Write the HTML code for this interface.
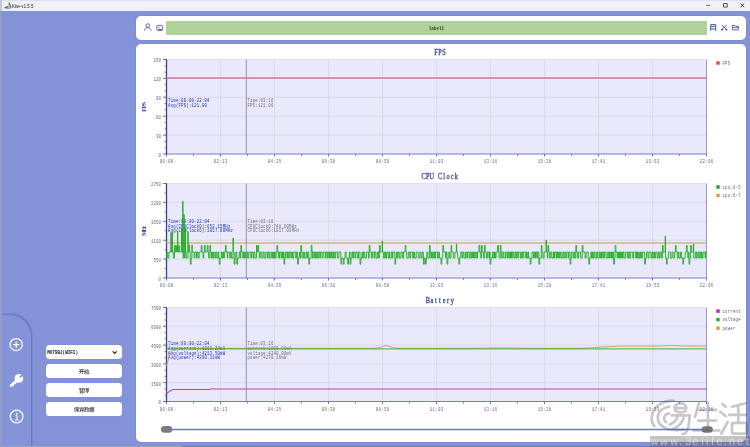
<!DOCTYPE html>
<html><head><meta charset="utf-8"><style>
html,body{margin:0;padding:0;}
body{width:750px;height:447px;overflow:hidden;position:relative;background:#8492d8;font-family:"Liberation Sans",sans-serif;}
.abs{position:absolute;}
#titlebar{left:0;top:0;width:750px;height:10.5px;background:#eef2f8;border-top:1px solid #dde1e8;box-sizing:border-box;}
.card{background:#fff;border-radius:5px;box-shadow:0 0 0 0.8px #7d8cd6;}
#topcard{left:136.3px;top:15.8px;width:609.7px;height:24px;}
#main{left:136.3px;top:43.8px;width:609.7px;height:398px;}
#lbl{left:166px;top:20.9px;width:541px;height:14px;background:#b1d19a;}
#nav{left:0;top:315px;width:31.3px;height:140px;background:#8593d9;border-top-right-radius:21px;box-shadow:0.3px -0.3px 1.8px rgba(60,70,150,0.45);}
.btn{left:45.8px;width:76px;height:14px;background:#fff;border-radius:3.5px;box-shadow:0 0 0 0.6px #8090d8;}
#svg,#wm{left:0;top:0;}
#band{left:650.2px;top:436.2px;width:100px;height:11px;background:rgba(90,90,90,0.36);}
#bandtxt{left:650px;top:436.5px;width:100px;height:10px;font-family:"Liberation Mono",monospace;font-size:9.5px;line-height:10px;color:rgba(235,235,235,0.9);letter-spacing:0.0px;white-space:nowrap;}
</style></head><body>
<div class="abs" id="titlebar"></div>
<div class="abs" id="nav"></div>
<div class="abs" style="left:12.4px;top:1.6px;font-size:6px;line-height:8px;color:#1c1c1c;transform:scaleX(0.75);transform-origin:0 0;will-change:transform;white-space:nowrap">Kite-v1.5.5</div>
<div class="abs" style="left:0;top:10.5px;width:2px;height:437px;background:linear-gradient(90deg,#9aa0c4,#8f98cc)"></div><div class="abs" style="left:0;top:0;width:1.5px;height:10.5px;background:#c4c8d4"></div>
<div class="abs" style="left:0;top:446px;width:182px;height:1px;background:#98a0c0"></div><div class="abs" style="left:182px;top:446px;width:568px;height:1px;background:#6c7cc8"></div>
<div class="abs card" id="topcard"></div>
<div class="abs card" id="main"></div>
<div class="abs" id="lbl"></div>
<div class="abs btn" style="top:345px"></div>
<div class="abs btn" style="top:363.9px"></div>
<div class="abs btn" style="top:382.9px"></div>
<div class="abs btn" style="top:401.9px"></div>
<svg class="abs" id="svg" width="750" height="447" viewBox="0 0 750 447">
<text x="428.8" y="29.9" font-family="Liberation Mono" font-size="5.6" font-weight="bold" fill="#2e3c2e" textLength="15.2" lengthAdjust="spacingAndGlyphs">label1</text>
<rect x="166.5" y="59.5" width="540.0" height="94.5" fill="#e9e9fb"/>
<line x1="166.5" y1="59.5" x2="706.5" y2="59.5" stroke="#dcdcf0" stroke-width="0.8"/>
<line x1="220.5" y1="59.5" x2="220.5" y2="154.0" stroke="#d6d6ec" stroke-width="0.8"/>
<line x1="274.5" y1="59.5" x2="274.5" y2="154.0" stroke="#d6d6ec" stroke-width="0.8"/>
<line x1="328.5" y1="59.5" x2="328.5" y2="154.0" stroke="#d6d6ec" stroke-width="0.8"/>
<line x1="382.5" y1="59.5" x2="382.5" y2="154.0" stroke="#d6d6ec" stroke-width="0.8"/>
<line x1="436.5" y1="59.5" x2="436.5" y2="154.0" stroke="#d6d6ec" stroke-width="0.8"/>
<line x1="490.5" y1="59.5" x2="490.5" y2="154.0" stroke="#d6d6ec" stroke-width="0.8"/>
<line x1="544.5" y1="59.5" x2="544.5" y2="154.0" stroke="#d6d6ec" stroke-width="0.8"/>
<line x1="598.5" y1="59.5" x2="598.5" y2="154.0" stroke="#d6d6ec" stroke-width="0.8"/>
<line x1="652.5" y1="59.5" x2="652.5" y2="154.0" stroke="#d6d6ec" stroke-width="0.8"/>
<line x1="166.5" y1="135.10" x2="706.5" y2="135.10" stroke="#d6d6ec" stroke-width="0.8"/>
<line x1="166.5" y1="116.20" x2="706.5" y2="116.20" stroke="#d6d6ec" stroke-width="0.8"/>
<line x1="166.5" y1="97.30" x2="706.5" y2="97.30" stroke="#d6d6ec" stroke-width="0.8"/>
<line x1="166.5" y1="78.40" x2="706.5" y2="78.40" stroke="#d6d6ec" stroke-width="0.8"/>
<line x1="706.5" y1="59.5" x2="706.5" y2="154.0" stroke="#8c8cc8" stroke-width="0.9"/>
<text transform="translate(433.88 54.90) scale(0.85 1)" x="2.40 7.20 12.00" y="0" text-anchor="middle" font-family="Liberation Serif" font-size="7.4" fill="#3e478a" stroke="#3e478a" stroke-width="0.3">FPS</text>
<line x1="163" y1="154.00" x2="166.5" y2="154.00" stroke="#5a62b0" stroke-width="0.9"/>
<text transform="translate(158.40 156.80) scale(0.68 1)" x="1.84" y="0" text-anchor="middle" font-family="Liberation Mono" font-size="6.1" fill="#62667c" >0</text>
<line x1="164.5" y1="147.70" x2="166.5" y2="147.70" stroke="#5a62b0" stroke-width="0.8"/>
<line x1="164.5" y1="141.40" x2="166.5" y2="141.40" stroke="#5a62b0" stroke-width="0.8"/>
<line x1="163" y1="135.10" x2="166.5" y2="135.10" stroke="#5a62b0" stroke-width="0.9"/>
<text transform="translate(155.90 137.90) scale(0.68 1)" x="1.84 5.51" y="0" text-anchor="middle" font-family="Liberation Mono" font-size="6.1" fill="#62667c" >30</text>
<line x1="164.5" y1="128.80" x2="166.5" y2="128.80" stroke="#5a62b0" stroke-width="0.8"/>
<line x1="164.5" y1="122.50" x2="166.5" y2="122.50" stroke="#5a62b0" stroke-width="0.8"/>
<line x1="163" y1="116.20" x2="166.5" y2="116.20" stroke="#5a62b0" stroke-width="0.9"/>
<text transform="translate(155.90 119.00) scale(0.68 1)" x="1.84 5.51" y="0" text-anchor="middle" font-family="Liberation Mono" font-size="6.1" fill="#62667c" >60</text>
<line x1="164.5" y1="109.90" x2="166.5" y2="109.90" stroke="#5a62b0" stroke-width="0.8"/>
<line x1="164.5" y1="103.60" x2="166.5" y2="103.60" stroke="#5a62b0" stroke-width="0.8"/>
<line x1="163" y1="97.30" x2="166.5" y2="97.30" stroke="#5a62b0" stroke-width="0.9"/>
<text transform="translate(155.90 100.10) scale(0.68 1)" x="1.84 5.51" y="0" text-anchor="middle" font-family="Liberation Mono" font-size="6.1" fill="#62667c" >90</text>
<line x1="164.5" y1="91.00" x2="166.5" y2="91.00" stroke="#5a62b0" stroke-width="0.8"/>
<line x1="164.5" y1="84.70" x2="166.5" y2="84.70" stroke="#5a62b0" stroke-width="0.8"/>
<line x1="163" y1="78.40" x2="166.5" y2="78.40" stroke="#5a62b0" stroke-width="0.9"/>
<text transform="translate(153.40 81.20) scale(0.68 1)" x="1.84 5.51 9.19" y="0" text-anchor="middle" font-family="Liberation Mono" font-size="6.1" fill="#62667c" >120</text>
<line x1="164.5" y1="72.10" x2="166.5" y2="72.10" stroke="#5a62b0" stroke-width="0.8"/>
<line x1="164.5" y1="65.80" x2="166.5" y2="65.80" stroke="#5a62b0" stroke-width="0.8"/>
<line x1="163" y1="59.50" x2="166.5" y2="59.50" stroke="#5a62b0" stroke-width="0.9"/>
<text transform="translate(153.40 62.30) scale(0.68 1)" x="1.84 5.51 9.19" y="0" text-anchor="middle" font-family="Liberation Mono" font-size="6.1" fill="#62667c" >150</text>
<line x1="166.5" y1="154.0" x2="166.5" y2="156.5" stroke="#5a62b0" stroke-width="0.9"/>
<line x1="193.5" y1="154.0" x2="193.5" y2="156.0" stroke="#5a62b0" stroke-width="0.8"/>
<text transform="translate(159.65 163.10) scale(0.72 1)" x="1.90 5.71 9.51 13.32 17.13" y="0" text-anchor="middle" font-family="Liberation Mono" font-size="5.8" fill="#666a8a" >00:00</text>
<line x1="220.5" y1="154.0" x2="220.5" y2="156.5" stroke="#5a62b0" stroke-width="0.9"/>
<line x1="247.5" y1="154.0" x2="247.5" y2="156.0" stroke="#5a62b0" stroke-width="0.8"/>
<text transform="translate(213.65 163.10) scale(0.72 1)" x="1.90 5.71 9.51 13.32 17.13" y="0" text-anchor="middle" font-family="Liberation Mono" font-size="5.8" fill="#666a8a" >02:13</text>
<line x1="274.5" y1="154.0" x2="274.5" y2="156.5" stroke="#5a62b0" stroke-width="0.9"/>
<line x1="301.5" y1="154.0" x2="301.5" y2="156.0" stroke="#5a62b0" stroke-width="0.8"/>
<text transform="translate(267.65 163.10) scale(0.72 1)" x="1.90 5.71 9.51 13.32 17.13" y="0" text-anchor="middle" font-family="Liberation Mono" font-size="5.8" fill="#666a8a" >04:25</text>
<line x1="328.5" y1="154.0" x2="328.5" y2="156.5" stroke="#5a62b0" stroke-width="0.9"/>
<line x1="355.5" y1="154.0" x2="355.5" y2="156.0" stroke="#5a62b0" stroke-width="0.8"/>
<text transform="translate(321.65 163.10) scale(0.72 1)" x="1.90 5.71 9.51 13.32 17.13" y="0" text-anchor="middle" font-family="Liberation Mono" font-size="5.8" fill="#666a8a" >06:38</text>
<line x1="382.5" y1="154.0" x2="382.5" y2="156.5" stroke="#5a62b0" stroke-width="0.9"/>
<line x1="409.5" y1="154.0" x2="409.5" y2="156.0" stroke="#5a62b0" stroke-width="0.8"/>
<text transform="translate(375.65 163.10) scale(0.72 1)" x="1.90 5.71 9.51 13.32 17.13" y="0" text-anchor="middle" font-family="Liberation Mono" font-size="5.8" fill="#666a8a" >08:50</text>
<line x1="436.5" y1="154.0" x2="436.5" y2="156.5" stroke="#5a62b0" stroke-width="0.9"/>
<line x1="463.5" y1="154.0" x2="463.5" y2="156.0" stroke="#5a62b0" stroke-width="0.8"/>
<text transform="translate(429.65 163.10) scale(0.72 1)" x="1.90 5.71 9.51 13.32 17.13" y="0" text-anchor="middle" font-family="Liberation Mono" font-size="5.8" fill="#666a8a" >11:03</text>
<line x1="490.5" y1="154.0" x2="490.5" y2="156.5" stroke="#5a62b0" stroke-width="0.9"/>
<line x1="517.5" y1="154.0" x2="517.5" y2="156.0" stroke="#5a62b0" stroke-width="0.8"/>
<text transform="translate(483.65 163.10) scale(0.72 1)" x="1.90 5.71 9.51 13.32 17.13" y="0" text-anchor="middle" font-family="Liberation Mono" font-size="5.8" fill="#666a8a" >13:16</text>
<line x1="544.5" y1="154.0" x2="544.5" y2="156.5" stroke="#5a62b0" stroke-width="0.9"/>
<line x1="571.5" y1="154.0" x2="571.5" y2="156.0" stroke="#5a62b0" stroke-width="0.8"/>
<text transform="translate(537.65 163.10) scale(0.72 1)" x="1.90 5.71 9.51 13.32 17.13" y="0" text-anchor="middle" font-family="Liberation Mono" font-size="5.8" fill="#666a8a" >15:28</text>
<line x1="598.5" y1="154.0" x2="598.5" y2="156.5" stroke="#5a62b0" stroke-width="0.9"/>
<line x1="625.5" y1="154.0" x2="625.5" y2="156.0" stroke="#5a62b0" stroke-width="0.8"/>
<text transform="translate(591.65 163.10) scale(0.72 1)" x="1.90 5.71 9.51 13.32 17.13" y="0" text-anchor="middle" font-family="Liberation Mono" font-size="5.8" fill="#666a8a" >17:41</text>
<line x1="652.5" y1="154.0" x2="652.5" y2="156.5" stroke="#5a62b0" stroke-width="0.9"/>
<line x1="679.5" y1="154.0" x2="679.5" y2="156.0" stroke="#5a62b0" stroke-width="0.8"/>
<text transform="translate(645.65 163.10) scale(0.72 1)" x="1.90 5.71 9.51 13.32 17.13" y="0" text-anchor="middle" font-family="Liberation Mono" font-size="5.8" fill="#666a8a" >19:53</text>
<line x1="706.5" y1="154.0" x2="706.5" y2="156.5" stroke="#5a62b0" stroke-width="0.9"/>
<text transform="translate(699.65 163.10) scale(0.72 1)" x="1.90 5.71 9.51 13.32 17.13" y="0" text-anchor="middle" font-family="Liberation Mono" font-size="5.8" fill="#666a8a" >22:06</text>
<line x1="166.5" y1="154.0" x2="706.5" y2="154.0" stroke="#747cca" stroke-width="1.0"/>
<line x1="166.5" y1="59.2" x2="166.5" y2="154.5" stroke="#3c4290" stroke-width="1.3"/>
<g transform="rotate(-90 143.9 106.75)">
<text x="138.95" y="108.55" font-family="Liberation Serif" font-size="6.0" font-weight="bold" fill="#3444a8" textLength="9.90" lengthAdjust="spacing" >FPS</text>
</g>
<rect x="166.5" y="183.5" width="540.0" height="94.5" fill="#e9e9fb"/>
<line x1="166.5" y1="183.5" x2="706.5" y2="183.5" stroke="#dcdcf0" stroke-width="0.8"/>
<line x1="220.5" y1="183.5" x2="220.5" y2="278.0" stroke="#d6d6ec" stroke-width="0.8"/>
<line x1="274.5" y1="183.5" x2="274.5" y2="278.0" stroke="#d6d6ec" stroke-width="0.8"/>
<line x1="328.5" y1="183.5" x2="328.5" y2="278.0" stroke="#d6d6ec" stroke-width="0.8"/>
<line x1="382.5" y1="183.5" x2="382.5" y2="278.0" stroke="#d6d6ec" stroke-width="0.8"/>
<line x1="436.5" y1="183.5" x2="436.5" y2="278.0" stroke="#d6d6ec" stroke-width="0.8"/>
<line x1="490.5" y1="183.5" x2="490.5" y2="278.0" stroke="#d6d6ec" stroke-width="0.8"/>
<line x1="544.5" y1="183.5" x2="544.5" y2="278.0" stroke="#d6d6ec" stroke-width="0.8"/>
<line x1="598.5" y1="183.5" x2="598.5" y2="278.0" stroke="#d6d6ec" stroke-width="0.8"/>
<line x1="652.5" y1="183.5" x2="652.5" y2="278.0" stroke="#d6d6ec" stroke-width="0.8"/>
<line x1="166.5" y1="259.10" x2="706.5" y2="259.10" stroke="#d6d6ec" stroke-width="0.8"/>
<line x1="166.5" y1="240.20" x2="706.5" y2="240.20" stroke="#d6d6ec" stroke-width="0.8"/>
<line x1="166.5" y1="221.30" x2="706.5" y2="221.30" stroke="#d6d6ec" stroke-width="0.8"/>
<line x1="166.5" y1="202.40" x2="706.5" y2="202.40" stroke="#d6d6ec" stroke-width="0.8"/>
<line x1="706.5" y1="183.5" x2="706.5" y2="278.0" stroke="#8c8cc8" stroke-width="0.9"/>
<text transform="translate(421.64 178.70) scale(0.85 1)" x="2.40 7.20 12.00 16.80 21.60 26.40 31.20 36.00 40.80" y="0" text-anchor="middle" font-family="Liberation Serif" font-size="7.4" fill="#3e478a" stroke="#3e478a" stroke-width="0.3">CPU Clock</text>
<line x1="163" y1="278.00" x2="166.5" y2="278.00" stroke="#5a62b0" stroke-width="0.9"/>
<text transform="translate(158.40 280.80) scale(0.68 1)" x="1.84" y="0" text-anchor="middle" font-family="Liberation Mono" font-size="6.1" fill="#62667c" >0</text>
<line x1="164.5" y1="268.55" x2="166.5" y2="268.55" stroke="#5a62b0" stroke-width="0.8"/>
<line x1="163" y1="259.10" x2="166.5" y2="259.10" stroke="#5a62b0" stroke-width="0.9"/>
<text transform="translate(153.40 261.90) scale(0.68 1)" x="1.84 5.51 9.19" y="0" text-anchor="middle" font-family="Liberation Mono" font-size="6.1" fill="#62667c" >550</text>
<line x1="164.5" y1="249.65" x2="166.5" y2="249.65" stroke="#5a62b0" stroke-width="0.8"/>
<line x1="163" y1="240.20" x2="166.5" y2="240.20" stroke="#5a62b0" stroke-width="0.9"/>
<text transform="translate(150.90 243.00) scale(0.68 1)" x="1.84 5.51 9.19 12.87" y="0" text-anchor="middle" font-family="Liberation Mono" font-size="6.1" fill="#62667c" >1100</text>
<line x1="164.5" y1="230.75" x2="166.5" y2="230.75" stroke="#5a62b0" stroke-width="0.8"/>
<line x1="163" y1="221.30" x2="166.5" y2="221.30" stroke="#5a62b0" stroke-width="0.9"/>
<text transform="translate(150.90 224.10) scale(0.68 1)" x="1.84 5.51 9.19 12.87" y="0" text-anchor="middle" font-family="Liberation Mono" font-size="6.1" fill="#62667c" >1650</text>
<line x1="164.5" y1="211.85" x2="166.5" y2="211.85" stroke="#5a62b0" stroke-width="0.8"/>
<line x1="163" y1="202.40" x2="166.5" y2="202.40" stroke="#5a62b0" stroke-width="0.9"/>
<text transform="translate(150.90 205.20) scale(0.68 1)" x="1.84 5.51 9.19 12.87" y="0" text-anchor="middle" font-family="Liberation Mono" font-size="6.1" fill="#62667c" >2200</text>
<line x1="164.5" y1="192.95" x2="166.5" y2="192.95" stroke="#5a62b0" stroke-width="0.8"/>
<line x1="163" y1="183.50" x2="166.5" y2="183.50" stroke="#5a62b0" stroke-width="0.9"/>
<text transform="translate(150.90 186.30) scale(0.68 1)" x="1.84 5.51 9.19 12.87" y="0" text-anchor="middle" font-family="Liberation Mono" font-size="6.1" fill="#62667c" >2750</text>
<line x1="166.5" y1="278.0" x2="166.5" y2="280.5" stroke="#5a62b0" stroke-width="0.9"/>
<line x1="193.5" y1="278.0" x2="193.5" y2="280.0" stroke="#5a62b0" stroke-width="0.8"/>
<text transform="translate(159.65 287.10) scale(0.72 1)" x="1.90 5.71 9.51 13.32 17.13" y="0" text-anchor="middle" font-family="Liberation Mono" font-size="5.8" fill="#666a8a" >00:00</text>
<line x1="220.5" y1="278.0" x2="220.5" y2="280.5" stroke="#5a62b0" stroke-width="0.9"/>
<line x1="247.5" y1="278.0" x2="247.5" y2="280.0" stroke="#5a62b0" stroke-width="0.8"/>
<text transform="translate(213.65 287.10) scale(0.72 1)" x="1.90 5.71 9.51 13.32 17.13" y="0" text-anchor="middle" font-family="Liberation Mono" font-size="5.8" fill="#666a8a" >02:13</text>
<line x1="274.5" y1="278.0" x2="274.5" y2="280.5" stroke="#5a62b0" stroke-width="0.9"/>
<line x1="301.5" y1="278.0" x2="301.5" y2="280.0" stroke="#5a62b0" stroke-width="0.8"/>
<text transform="translate(267.65 287.10) scale(0.72 1)" x="1.90 5.71 9.51 13.32 17.13" y="0" text-anchor="middle" font-family="Liberation Mono" font-size="5.8" fill="#666a8a" >04:25</text>
<line x1="328.5" y1="278.0" x2="328.5" y2="280.5" stroke="#5a62b0" stroke-width="0.9"/>
<line x1="355.5" y1="278.0" x2="355.5" y2="280.0" stroke="#5a62b0" stroke-width="0.8"/>
<text transform="translate(321.65 287.10) scale(0.72 1)" x="1.90 5.71 9.51 13.32 17.13" y="0" text-anchor="middle" font-family="Liberation Mono" font-size="5.8" fill="#666a8a" >06:38</text>
<line x1="382.5" y1="278.0" x2="382.5" y2="280.5" stroke="#5a62b0" stroke-width="0.9"/>
<line x1="409.5" y1="278.0" x2="409.5" y2="280.0" stroke="#5a62b0" stroke-width="0.8"/>
<text transform="translate(375.65 287.10) scale(0.72 1)" x="1.90 5.71 9.51 13.32 17.13" y="0" text-anchor="middle" font-family="Liberation Mono" font-size="5.8" fill="#666a8a" >08:50</text>
<line x1="436.5" y1="278.0" x2="436.5" y2="280.5" stroke="#5a62b0" stroke-width="0.9"/>
<line x1="463.5" y1="278.0" x2="463.5" y2="280.0" stroke="#5a62b0" stroke-width="0.8"/>
<text transform="translate(429.65 287.10) scale(0.72 1)" x="1.90 5.71 9.51 13.32 17.13" y="0" text-anchor="middle" font-family="Liberation Mono" font-size="5.8" fill="#666a8a" >11:03</text>
<line x1="490.5" y1="278.0" x2="490.5" y2="280.5" stroke="#5a62b0" stroke-width="0.9"/>
<line x1="517.5" y1="278.0" x2="517.5" y2="280.0" stroke="#5a62b0" stroke-width="0.8"/>
<text transform="translate(483.65 287.10) scale(0.72 1)" x="1.90 5.71 9.51 13.32 17.13" y="0" text-anchor="middle" font-family="Liberation Mono" font-size="5.8" fill="#666a8a" >13:16</text>
<line x1="544.5" y1="278.0" x2="544.5" y2="280.5" stroke="#5a62b0" stroke-width="0.9"/>
<line x1="571.5" y1="278.0" x2="571.5" y2="280.0" stroke="#5a62b0" stroke-width="0.8"/>
<text transform="translate(537.65 287.10) scale(0.72 1)" x="1.90 5.71 9.51 13.32 17.13" y="0" text-anchor="middle" font-family="Liberation Mono" font-size="5.8" fill="#666a8a" >15:28</text>
<line x1="598.5" y1="278.0" x2="598.5" y2="280.5" stroke="#5a62b0" stroke-width="0.9"/>
<line x1="625.5" y1="278.0" x2="625.5" y2="280.0" stroke="#5a62b0" stroke-width="0.8"/>
<text transform="translate(591.65 287.10) scale(0.72 1)" x="1.90 5.71 9.51 13.32 17.13" y="0" text-anchor="middle" font-family="Liberation Mono" font-size="5.8" fill="#666a8a" >17:41</text>
<line x1="652.5" y1="278.0" x2="652.5" y2="280.5" stroke="#5a62b0" stroke-width="0.9"/>
<line x1="679.5" y1="278.0" x2="679.5" y2="280.0" stroke="#5a62b0" stroke-width="0.8"/>
<text transform="translate(645.65 287.10) scale(0.72 1)" x="1.90 5.71 9.51 13.32 17.13" y="0" text-anchor="middle" font-family="Liberation Mono" font-size="5.8" fill="#666a8a" >19:53</text>
<line x1="706.5" y1="278.0" x2="706.5" y2="280.5" stroke="#5a62b0" stroke-width="0.9"/>
<text transform="translate(699.65 287.10) scale(0.72 1)" x="1.90 5.71 9.51 13.32 17.13" y="0" text-anchor="middle" font-family="Liberation Mono" font-size="5.8" fill="#666a8a" >22:06</text>
<line x1="166.5" y1="278.0" x2="706.5" y2="278.0" stroke="#747cca" stroke-width="1.0"/>
<line x1="166.5" y1="183.2" x2="166.5" y2="278.5" stroke="#3c4290" stroke-width="1.3"/>
<g transform="rotate(-90 143.9 230.75)">
<text x="138.95" y="232.55" font-family="Liberation Serif" font-size="6.0" font-weight="bold" fill="#3444a8" textLength="9.90" lengthAdjust="spacing" >MHz</text>
</g>
<rect x="166.5" y="307.5" width="540.0" height="94.0" fill="#e9e9fb"/>
<line x1="166.5" y1="307.5" x2="706.5" y2="307.5" stroke="#dcdcf0" stroke-width="0.8"/>
<line x1="220.5" y1="307.5" x2="220.5" y2="401.5" stroke="#d6d6ec" stroke-width="0.8"/>
<line x1="274.5" y1="307.5" x2="274.5" y2="401.5" stroke="#d6d6ec" stroke-width="0.8"/>
<line x1="328.5" y1="307.5" x2="328.5" y2="401.5" stroke="#d6d6ec" stroke-width="0.8"/>
<line x1="382.5" y1="307.5" x2="382.5" y2="401.5" stroke="#d6d6ec" stroke-width="0.8"/>
<line x1="436.5" y1="307.5" x2="436.5" y2="401.5" stroke="#d6d6ec" stroke-width="0.8"/>
<line x1="490.5" y1="307.5" x2="490.5" y2="401.5" stroke="#d6d6ec" stroke-width="0.8"/>
<line x1="544.5" y1="307.5" x2="544.5" y2="401.5" stroke="#d6d6ec" stroke-width="0.8"/>
<line x1="598.5" y1="307.5" x2="598.5" y2="401.5" stroke="#d6d6ec" stroke-width="0.8"/>
<line x1="652.5" y1="307.5" x2="652.5" y2="401.5" stroke="#d6d6ec" stroke-width="0.8"/>
<line x1="166.5" y1="382.70" x2="706.5" y2="382.70" stroke="#d6d6ec" stroke-width="0.8"/>
<line x1="166.5" y1="363.90" x2="706.5" y2="363.90" stroke="#d6d6ec" stroke-width="0.8"/>
<line x1="166.5" y1="345.10" x2="706.5" y2="345.10" stroke="#d6d6ec" stroke-width="0.8"/>
<line x1="166.5" y1="326.30" x2="706.5" y2="326.30" stroke="#d6d6ec" stroke-width="0.8"/>
<line x1="706.5" y1="307.5" x2="706.5" y2="401.5" stroke="#8c8cc8" stroke-width="0.9"/>
<text transform="translate(425.72 302.50) scale(0.85 1)" x="2.40 7.20 12.00 16.80 21.60 26.40 31.20" y="0" text-anchor="middle" font-family="Liberation Serif" font-size="7.4" fill="#3e478a" stroke="#3e478a" stroke-width="0.3">Battery</text>
<line x1="163" y1="401.50" x2="166.5" y2="401.50" stroke="#5a62b0" stroke-width="0.9"/>
<text transform="translate(158.40 404.30) scale(0.68 1)" x="1.84" y="0" text-anchor="middle" font-family="Liberation Mono" font-size="6.1" fill="#62667c" >0</text>
<line x1="164.5" y1="395.23" x2="166.5" y2="395.23" stroke="#5a62b0" stroke-width="0.8"/>
<line x1="164.5" y1="388.97" x2="166.5" y2="388.97" stroke="#5a62b0" stroke-width="0.8"/>
<line x1="163" y1="382.70" x2="166.5" y2="382.70" stroke="#5a62b0" stroke-width="0.9"/>
<text transform="translate(150.90 385.50) scale(0.68 1)" x="1.84 5.51 9.19 12.87" y="0" text-anchor="middle" font-family="Liberation Mono" font-size="6.1" fill="#62667c" >1500</text>
<line x1="164.5" y1="376.43" x2="166.5" y2="376.43" stroke="#5a62b0" stroke-width="0.8"/>
<line x1="164.5" y1="370.17" x2="166.5" y2="370.17" stroke="#5a62b0" stroke-width="0.8"/>
<line x1="163" y1="363.90" x2="166.5" y2="363.90" stroke="#5a62b0" stroke-width="0.9"/>
<text transform="translate(150.90 366.70) scale(0.68 1)" x="1.84 5.51 9.19 12.87" y="0" text-anchor="middle" font-family="Liberation Mono" font-size="6.1" fill="#62667c" >3000</text>
<line x1="164.5" y1="357.63" x2="166.5" y2="357.63" stroke="#5a62b0" stroke-width="0.8"/>
<line x1="164.5" y1="351.37" x2="166.5" y2="351.37" stroke="#5a62b0" stroke-width="0.8"/>
<line x1="163" y1="345.10" x2="166.5" y2="345.10" stroke="#5a62b0" stroke-width="0.9"/>
<text transform="translate(150.90 347.90) scale(0.68 1)" x="1.84 5.51 9.19 12.87" y="0" text-anchor="middle" font-family="Liberation Mono" font-size="6.1" fill="#62667c" >4500</text>
<line x1="164.5" y1="338.83" x2="166.5" y2="338.83" stroke="#5a62b0" stroke-width="0.8"/>
<line x1="164.5" y1="332.57" x2="166.5" y2="332.57" stroke="#5a62b0" stroke-width="0.8"/>
<line x1="163" y1="326.30" x2="166.5" y2="326.30" stroke="#5a62b0" stroke-width="0.9"/>
<text transform="translate(150.90 329.10) scale(0.68 1)" x="1.84 5.51 9.19 12.87" y="0" text-anchor="middle" font-family="Liberation Mono" font-size="6.1" fill="#62667c" >6000</text>
<line x1="164.5" y1="320.03" x2="166.5" y2="320.03" stroke="#5a62b0" stroke-width="0.8"/>
<line x1="164.5" y1="313.77" x2="166.5" y2="313.77" stroke="#5a62b0" stroke-width="0.8"/>
<line x1="163" y1="307.50" x2="166.5" y2="307.50" stroke="#5a62b0" stroke-width="0.9"/>
<text transform="translate(150.90 310.30) scale(0.68 1)" x="1.84 5.51 9.19 12.87" y="0" text-anchor="middle" font-family="Liberation Mono" font-size="6.1" fill="#62667c" >7500</text>
<line x1="166.5" y1="401.5" x2="166.5" y2="404.0" stroke="#5a62b0" stroke-width="0.9"/>
<line x1="193.5" y1="401.5" x2="193.5" y2="403.5" stroke="#5a62b0" stroke-width="0.8"/>
<text transform="translate(159.65 410.60) scale(0.72 1)" x="1.90 5.71 9.51 13.32 17.13" y="0" text-anchor="middle" font-family="Liberation Mono" font-size="5.8" fill="#666a8a" >00:00</text>
<line x1="220.5" y1="401.5" x2="220.5" y2="404.0" stroke="#5a62b0" stroke-width="0.9"/>
<line x1="247.5" y1="401.5" x2="247.5" y2="403.5" stroke="#5a62b0" stroke-width="0.8"/>
<text transform="translate(213.65 410.60) scale(0.72 1)" x="1.90 5.71 9.51 13.32 17.13" y="0" text-anchor="middle" font-family="Liberation Mono" font-size="5.8" fill="#666a8a" >02:13</text>
<line x1="274.5" y1="401.5" x2="274.5" y2="404.0" stroke="#5a62b0" stroke-width="0.9"/>
<line x1="301.5" y1="401.5" x2="301.5" y2="403.5" stroke="#5a62b0" stroke-width="0.8"/>
<text transform="translate(267.65 410.60) scale(0.72 1)" x="1.90 5.71 9.51 13.32 17.13" y="0" text-anchor="middle" font-family="Liberation Mono" font-size="5.8" fill="#666a8a" >04:25</text>
<line x1="328.5" y1="401.5" x2="328.5" y2="404.0" stroke="#5a62b0" stroke-width="0.9"/>
<line x1="355.5" y1="401.5" x2="355.5" y2="403.5" stroke="#5a62b0" stroke-width="0.8"/>
<text transform="translate(321.65 410.60) scale(0.72 1)" x="1.90 5.71 9.51 13.32 17.13" y="0" text-anchor="middle" font-family="Liberation Mono" font-size="5.8" fill="#666a8a" >06:38</text>
<line x1="382.5" y1="401.5" x2="382.5" y2="404.0" stroke="#5a62b0" stroke-width="0.9"/>
<line x1="409.5" y1="401.5" x2="409.5" y2="403.5" stroke="#5a62b0" stroke-width="0.8"/>
<text transform="translate(375.65 410.60) scale(0.72 1)" x="1.90 5.71 9.51 13.32 17.13" y="0" text-anchor="middle" font-family="Liberation Mono" font-size="5.8" fill="#666a8a" >08:50</text>
<line x1="436.5" y1="401.5" x2="436.5" y2="404.0" stroke="#5a62b0" stroke-width="0.9"/>
<line x1="463.5" y1="401.5" x2="463.5" y2="403.5" stroke="#5a62b0" stroke-width="0.8"/>
<text transform="translate(429.65 410.60) scale(0.72 1)" x="1.90 5.71 9.51 13.32 17.13" y="0" text-anchor="middle" font-family="Liberation Mono" font-size="5.8" fill="#666a8a" >11:03</text>
<line x1="490.5" y1="401.5" x2="490.5" y2="404.0" stroke="#5a62b0" stroke-width="0.9"/>
<line x1="517.5" y1="401.5" x2="517.5" y2="403.5" stroke="#5a62b0" stroke-width="0.8"/>
<text transform="translate(483.65 410.60) scale(0.72 1)" x="1.90 5.71 9.51 13.32 17.13" y="0" text-anchor="middle" font-family="Liberation Mono" font-size="5.8" fill="#666a8a" >13:16</text>
<line x1="544.5" y1="401.5" x2="544.5" y2="404.0" stroke="#5a62b0" stroke-width="0.9"/>
<line x1="571.5" y1="401.5" x2="571.5" y2="403.5" stroke="#5a62b0" stroke-width="0.8"/>
<text transform="translate(537.65 410.60) scale(0.72 1)" x="1.90 5.71 9.51 13.32 17.13" y="0" text-anchor="middle" font-family="Liberation Mono" font-size="5.8" fill="#666a8a" >15:28</text>
<line x1="598.5" y1="401.5" x2="598.5" y2="404.0" stroke="#5a62b0" stroke-width="0.9"/>
<line x1="625.5" y1="401.5" x2="625.5" y2="403.5" stroke="#5a62b0" stroke-width="0.8"/>
<text transform="translate(591.65 410.60) scale(0.72 1)" x="1.90 5.71 9.51 13.32 17.13" y="0" text-anchor="middle" font-family="Liberation Mono" font-size="5.8" fill="#666a8a" >17:41</text>
<line x1="652.5" y1="401.5" x2="652.5" y2="404.0" stroke="#5a62b0" stroke-width="0.9"/>
<line x1="679.5" y1="401.5" x2="679.5" y2="403.5" stroke="#5a62b0" stroke-width="0.8"/>
<text transform="translate(645.65 410.60) scale(0.72 1)" x="1.90 5.71 9.51 13.32 17.13" y="0" text-anchor="middle" font-family="Liberation Mono" font-size="5.8" fill="#666a8a" >19:53</text>
<line x1="706.5" y1="401.5" x2="706.5" y2="404.0" stroke="#5a62b0" stroke-width="0.9"/>
<text transform="translate(699.65 410.60) scale(0.72 1)" x="1.90 5.71 9.51 13.32 17.13" y="0" text-anchor="middle" font-family="Liberation Mono" font-size="5.8" fill="#666a8a" >22:06</text>
<line x1="166.5" y1="401.5" x2="706.5" y2="401.5" stroke="#747cca" stroke-width="1.0"/>
<line x1="166.5" y1="307.2" x2="166.5" y2="402.0" stroke="#3c4290" stroke-width="1.3"/>
<text transform="translate(168.00 102.30) scale(0.8 1)" x="1.62 4.88 8.12 11.38 14.62 17.88 21.12 24.38 27.62 30.88 34.12 37.38 40.62 43.88 47.12 50.37" y="0" text-anchor="middle" font-family="Liberation Mono" font-size="5.0" fill="#1a2cc4" >Time:00:00-22:04</text>
<text transform="translate(168.00 106.70) scale(0.8 1)" x="1.62 4.88 8.12 11.38 14.62 17.88 21.12 24.38 27.62 30.88 34.12 37.38 40.62 43.88 47.12" y="0" text-anchor="middle" font-family="Liberation Mono" font-size="5.0" fill="#1a2cc4" >Avg(FPS):121.00</text>
<text transform="translate(247.40 102.30) scale(0.8 1)" x="1.62 4.88 8.12 11.38 14.62 17.88 21.12 24.38 27.62 30.88" y="0" text-anchor="middle" font-family="Liberation Mono" font-size="5.0" fill="#6c6c74" >Time:03:16</text>
<text transform="translate(247.40 106.70) scale(0.8 1)" x="1.62 4.88 8.12 11.38 14.62 17.88 21.12 24.38 27.62 30.88" y="0" text-anchor="middle" font-family="Liberation Mono" font-size="5.0" fill="#6c6c74" >FPS:121.00</text>
<text transform="translate(168.00 223.30) scale(0.8 1)" x="1.62 4.88 8.12 11.38 14.62 17.88 21.12 24.38 27.62 30.88 34.12 37.38 40.62 43.88 47.12 50.37" y="0" text-anchor="middle" font-family="Liberation Mono" font-size="5.0" fill="#1a2cc4" >Time:00:00-22:04</text>
<text transform="translate(168.00 227.55) scale(0.8 1)" x="1.62 4.88 8.12 11.38 14.62 17.88 21.12 24.38 27.62 30.88 34.12 37.38 40.62 43.88 47.12 50.37 53.62 56.88 60.12 63.37 66.62 69.88 73.12 76.38" y="0" text-anchor="middle" font-family="Liberation Mono" font-size="5.0" fill="#1a2cc4" >Avg(CPUClock0):652.15MHz</text>
<text transform="translate(168.00 231.80) scale(0.8 1)" x="1.62 4.88 8.12 11.38 14.62 17.88 21.12 24.38 27.62 30.88 34.12 37.38 40.62 43.88 47.12 50.37 53.62 56.88 60.12 63.37 66.62 69.88 73.12 76.38 79.62" y="0" text-anchor="middle" font-family="Liberation Mono" font-size="5.0" fill="#1a2cc4" >Avg(CPUClock6):1017.00MHz</text>
<text transform="translate(247.40 223.30) scale(0.8 1)" x="1.62 4.88 8.12 11.38 14.62 17.88 21.12 24.38 27.62 30.88" y="0" text-anchor="middle" font-family="Liberation Mono" font-size="5.0" fill="#6c6c74" >Time:03:16</text>
<text transform="translate(247.40 227.55) scale(0.8 1)" x="1.62 4.88 8.12 11.38 14.62 17.88 21.12 24.38 27.62 30.88 34.12 37.38 40.62 43.88 47.12 50.37 53.62 56.88 60.12" y="0" text-anchor="middle" font-family="Liberation Mono" font-size="5.0" fill="#6c6c74" >CPUClock0:748.00MHz</text>
<text transform="translate(247.40 231.80) scale(0.8 1)" x="1.62 4.88 8.12 11.38 14.62 17.88 21.12 24.38 27.62 30.88 34.12 37.38 40.62 43.88 47.12 50.37 53.62 56.88 60.12 63.37" y="0" text-anchor="middle" font-family="Liberation Mono" font-size="5.0" fill="#6c6c74" >CPUClock6:1017.00MHz</text>
<text transform="translate(168.00 345.30) scale(0.8 1)" x="1.62 4.88 8.12 11.38 14.62 17.88 21.12 24.38 27.62 30.88 34.12 37.38 40.62 43.88 47.12 50.37" y="0" text-anchor="middle" font-family="Liberation Mono" font-size="5.0" fill="#1a2cc4" >Time:00:00-22:04</text>
<text transform="translate(168.00 349.95) scale(0.8 1)" x="1.62 4.88 8.12 11.38 14.62 17.88 21.12 24.38 27.62 30.88 34.12 37.38 40.62 43.88 47.12 50.37 53.62 56.88 60.12 63.37 66.62 69.88" y="0" text-anchor="middle" font-family="Liberation Mono" font-size="5.0" fill="#1a2cc4" >Avg(current):1018.28mA</text>
<text transform="translate(168.00 354.60) scale(0.8 1)" x="1.62 4.88 8.12 11.38 14.62 17.88 21.12 24.38 27.62 30.88 34.12 37.38 40.62 43.88 47.12 50.37 53.62 56.88 60.12 63.37 66.62 69.88" y="0" text-anchor="middle" font-family="Liberation Mono" font-size="5.0" fill="#1a2cc4" >Avg(voltage):4213.50mW</text>
<text transform="translate(168.00 359.25) scale(0.8 1)" x="1.62 4.88 8.12 11.38 14.62 17.88 21.12 24.38 27.62 30.88 34.12 37.38 40.62 43.88 47.12 50.37 53.62 56.88 60.12 63.37" y="0" text-anchor="middle" font-family="Liberation Mono" font-size="5.0" fill="#1a2cc4" >Avg(power):4290.11mW</text>
<text transform="translate(247.40 345.30) scale(0.8 1)" x="1.62 4.88 8.12 11.38 14.62 17.88 21.12 24.38 27.62 30.88" y="0" text-anchor="middle" font-family="Liberation Mono" font-size="5.0" fill="#6c6c74" >Time:03:16</text>
<text transform="translate(247.40 349.95) scale(0.8 1)" x="1.62 4.88 8.12 11.38 14.62 17.88 21.12 24.38 27.62 30.88 34.12 37.38 40.62 43.88 47.12 50.37 53.62" y="0" text-anchor="middle" font-family="Liberation Mono" font-size="5.0" fill="#6c6c74" >current:1009.00mA</text>
<text transform="translate(247.40 354.60) scale(0.8 1)" x="1.62 4.88 8.12 11.38 14.62 17.88 21.12 24.38 27.62 30.88 34.12 37.38 40.62 43.88 47.12 50.37 53.62" y="0" text-anchor="middle" font-family="Liberation Mono" font-size="5.0" fill="#6c6c74" >voltage:4240.00mV</text>
<text transform="translate(247.40 359.25) scale(0.8 1)" x="1.62 4.88 8.12 11.38 14.62 17.88 21.12 24.38 27.62 30.88 34.12 37.38 40.62 43.88 47.12" y="0" text-anchor="middle" font-family="Liberation Mono" font-size="5.0" fill="#6c6c74" >power:4278.16mW</text>
<line x1="166.5" y1="78.0" x2="706.5" y2="78.0" stroke="#d87890" stroke-width="1.4"/>
<line x1="166.5" y1="243.0" x2="706.5" y2="243.0" stroke="#d6b47e" stroke-width="1.6"/>
<path d="M166.5,258.0V252.0H167.7V258.0H168.9V252.0H170.9V232.6H171.2V252.0H172.1V232H172.4V252.0H173.3V258.0H174.5V245H174.8V252.0H175.7V245.5H176.5V252.0H177.5V231H177.8V252.0H178.7V245.5H179.5V252.0H181.5V228.7H181.8V252.0H182.7V201.3H183.0V258.0H183.9V214.6H184.2V258.0H185.1V228.7H185.4V252.0H186.3V258.0H187.9V232H188.2V252.0H189.1V245H189.4V252.0H190.3V264.2H191.1V258.0H191.9V245H192.2V252.0H193.1V252.0H194.1V258.0H194.9V252.0H196.4V258.0H197.0V252.0H198.0V258.0H199.2V252.0H201.2V245.5H202.0V252.0H203.0V258.0H203.8V252.0H204.4V245.5H205.2V252.0H207.2V245.5H208.0V252.0H208.6V258.0H209.8V245.5H210.6V252.0H211.2V258.0H211.8V252.0H212.4V258.0H213.6V252.0H214.8V258.0H215.8V252.0H216.8V258.0H218.0V252.0H218.6V258.0H219.2V264.2H220.0V258.0H221.2V252.0H222.0V258.0H222.8V252.0H223.6V258.0H224.4V252.0H225.4V245.5H226.2V252.0H227.2V258.0H227.8V252.0H229.8V258.0H230.4V252.0H231.4V258.0H233.0V238H233.3V252.0H234.2V264.2H235.0V258.0H235.8V252.0H236.8V264.2H237.6V258.0H239.2V252.0H240.2V258.0H240.8V245.5H241.6V252.0H242.8V258.0H243.4V252.0H244.4V258.0H245.2V252.0H246.2V258.0H247.0V252.0H247.8V258.0H248.8V252.0H250.8V258.0H251.6V252.0H253.1V258.0H253.9V252.0H254.9V258.0H256.5V245.5H257.3V252.0H257.9V245.5H258.7V252.0H259.3V258.0H260.3V252.0H261.8V258.0H263.0V252.0H264.2V258.0H265.8V252.0H267.3V258.0H268.1V252.0H269.3V258.0H270.9V252.0H271.9V258.0H272.7V252.0H273.3V258.0H274.5V252.0H275.1V258.0H276.1V252.0H276.9V245.5H277.7V252.0H278.5V258.0H279.5V252.0H281.0V258.0H281.8V252.0H282.4V258.0H283.4V252.0H284.0V264.2H284.8V258.0H285.4V252.0H286.9V258.0H287.7V252.0H288.3V258.0H289.3V252.0H290.8V258.0H291.6V252.0H292.6V258.0H293.8V252.0H295.8V258.0H296.4V252.0H297.6V264.2H298.4V258.0H299.6V252.0H300.2V258.0H300.8V245.5H301.6V252.0H302.2V258.0H303.4V252.0H304.4V258.0H306.0V252.0H307.0V258.0H307.6V252.0H308.8V264.2H309.6V258.0H311.2V245.5H312.0V252.0H312.6V258.0H313.2V252.0H314.4V258.0H315.6V252.0H316.2V258.0H317.0V252.0H317.8V258.0H318.8V252.0H319.8V258.0H320.6V252.0H322.1V258.0H323.3V252.0H325.3V258.0H326.1V252.0H327.3V258.0H328.1V252.0H329.1V258.0H329.7V252.0H330.7V258.0H331.3V252.0H332.3V258.0H333.5V252.0H334.7V258.0H335.7V252.0H337.7V258.0H338.9V252.0H340.9V264.2H341.7V258.0H343.3V264.2H344.1V258.0H345.1V252.0H346.1V258.0H347.7V264.2H348.5V258.0H349.3V252.0H350.1V264.2H350.9V258.0H351.9V252.0H352.7V258.0H353.3V252.0H354.8V258.0H355.8V252.0H357.3V258.0H358.5V252.0H360.0V264.2H360.8V258.0H362.0V252.0H362.6V258.0H363.6V252.0H364.8V258.0H366.4V252.0H368.4V258.0H369.2V245.5H370.0V252.0H371.5V258.0H372.7V252.0H374.2V258.0H374.8V252.0H376.0V258.0H377.6V252.0H378.6V258.0H379.4V245.5H380.2V252.0H382.2V241H382.5V252.0H383.4V258.0H384.6V252.0H385.6V258.0H386.6V252.0H388.1V258.0H389.1V252.0H389.7V258.0H391.3V252.0H392.3V258.0H392.9V252.0H394.9V264.2H395.7V258.0H396.3V252.0H397.3V258.0H398.1V252.0H399.3V258.0H400.9V252.0H402.4V258.0H403.6V252.0H405.1V245.5H405.9V252.0H406.7V258.0H408.3V252.0H409.8V258.0H410.6V252.0H412.6V258.0H413.6V252.0H414.6V258.0H416.2V252.0H418.2V258.0H419.8V252.0H421.0V258.0H422.2V252.0H423.4V264.2H424.2V258.0H425.4V264.2H426.2V258.0H426.8V252.0H427.8V258.0H429.4V245.5H430.2V252.0H430.8V258.0H431.4V252.0H432.4V258.0H433.6V252.0H434.6V258.0H435.6V252.0H437.6V258.0H438.8V252.0H439.4V258.0H441.0V264.2H441.8V258.0H442.8V245.5H443.6V252.0H445.6V258.0H446.2V252.0H447.0V264.2H447.8V258.0H448.8V252.0H449.8V258.0H451.0V245.5H451.8V252.0H453.3V258.0H454.9V252.0H456.4V244H456.7V252.0H457.6V258.0H458.8V264.2H459.6V258.0H460.8V252.0H462.0V258.0H462.8V252.0H464.0V258.0H465.6V252.0H466.8V258.0H467.6V252.0H469.1V258.0H470.1V252.0H471.1V258.0H471.9V252.0H472.7V258.0H473.5V252.0H474.3V258.0H475.3V252.0H476.3V258.0H477.5V252.0H479.0V245.5H479.8V252.0H480.8V258.0H481.4V245.5H482.2V252.0H483.4V258.0H484.4V245.5H485.2V252.0H486.4V258.0H487.4V252.0H488.9V258.0H489.5V252.0H490.1V264.2H490.9V258.0H492.5V252.0H493.7V258.0H494.5V252.0H495.3V258.0H496.1V252.0H497.6V245.5H498.4V252.0H499.0V258.0H500.2V245.5H501.0V252.0H501.6V258.0H502.8V252.0H503.8V258.0H505.4V252.0H506.9V258.0H507.7V252.0H508.7V258.0H509.7V252.0H510.5V258.0H511.1V252.0H511.7V258.0H512.3V252.0H513.8V258.0H515.0V252.0H515.8V258.0H516.8V252.0H517.8V258.0H518.4V252.0H520.4V258.0H521.6V252.0H522.6V258.0H523.6V252.0H525.6V258.0H526.4V252.0H527.0V258.0H528.0V252.0H528.6V258.0H530.2V264.2H531.0V258.0H532.0V252.0H533.5V258.0H534.3V252.0H535.5V258.0H536.1V252.0H537.1V258.0H537.7V252.0H538.9V264.2H539.7V258.0H541.3V245.5H542.1V252.0H542.9V258.0H544.1V252.0H546.1V240H546.4V252.0H547.3V258.0H547.9V245.5H548.7V252.0H549.7V258.0H550.7V252.0H551.9V258.0H553.5V252.0H554.1V258.0H554.7V252.0H556.2V258.0H556.8V252.0H557.6V258.0H558.4V252.0H559.6V258.0H560.2V252.0H561.2V258.0H562.8V252.0H563.8V258.0H564.8V252.0H565.8V258.0H566.8V252.0H568.3V258.0H568.9V252.0H570.1V264.2H570.9V258.0H571.7V252.0H573.2V258.0H574.2V252.0H574.8V258.0H575.8V245.5H576.6V252.0H577.4V258.0H578.6V252.0H580.6V258.0H582.2V245.5H583.0V252.0H585.0V258.0H586.2V252.0H588.2V258.0H588.8V264.2H589.6V258.0H590.8V252.0H591.6V258.0H592.6V252.0H593.2V258.0H594.0V252.0H595.0V258.0H596.6V252.0H597.6V258.0H599.2V252.0H600.0V258.0H600.8V252.0H601.4V258.0H602.4V252.0H603.6V258.0H604.6V252.0H606.1V258.0H607.7V252.0H608.7V258.0H609.5V252.0H610.7V258.0H611.5V252.0H612.1V258.0H612.7V252.0H613.7V264.2H614.5V258.0H615.1V245.5H615.9V252.0H617.1V258.0H617.7V252.0H618.5V258.0H619.5V252.0H620.5V258.0H621.5V252.0H622.3V258.0H622.9V252.0H623.9V258.0H625.5V252.0H627.5V258.0H628.7V252.0H629.7V258.0H630.7V252.0H632.7V258.0H633.7V252.0H635.7V258.0H636.5V252.0H637.5V258.0H638.7V252.0H639.3V258.0H640.5V252.0H641.5V258.0H642.7V252.0H644.7V264.2H645.5V258.0H646.5V252.0H648.0V258.0H649.0V252.0H651.0V258.0H652.0V252.0H652.8V258.0H653.8V252.0H654.4V258.0H655.6V252.0H657.1V258.0H658.3V252.0H659.3V258.0H660.1V252.0H661.6V258.0H662.4V245.5H663.2V252.0H665.2V236H665.5V258.0H666.4V264.2H667.2V258.0H668.4V252.0H670.4V258.0H672.0V252.0H673.0V258.0H674.6V252.0H675.4V245.5H676.2V252.0H677.2V258.0H678.2V252.0H679.0V258.0H680.6V252.0H681.6V258.0H682.8V264.2H683.6V258.0H685.2V252.0H686.4V245.5H687.2V252.0H687.8V258.0H688.4V252.0H689.0V264.2H689.8V258.0H690.6V245.5H691.4V252.0H693.4V244H693.7V258.0H694.6V258.0H695.4V252.0H696.6V258.0H697.8V252.0H698.8V258.0H699.8V252.0H700.8V258.0H701.4V252.0H702.0V258.0H703.0V252.0H705.0V258.0H705.6V252.0H706.5" fill="none" stroke="#16a816" stroke-width="0.85"/>
<path d="M166.5,365.60 L168.5,358.98 L170.5,353.37 L172.5,349.62 L174.5,348.30 L176.5,348.30 L178.5,348.30 L180.5,348.30 L182.5,348.30 L184.5,348.30 L186.5,348.30 L188.5,348.30 L190.5,348.30 L192.5,348.30 L194.5,348.30 L196.5,348.30 L198.5,348.30 L200.5,348.30 L202.5,348.30 L204.5,348.30 L206.5,348.30 L208.5,348.30 L210.5,348.30 L212.5,348.30 L214.5,348.30 L216.5,348.30 L218.5,348.30 L220.5,348.30 L222.5,348.30 L224.5,348.30 L226.5,348.30 L228.5,348.30 L230.5,348.30 L232.5,348.30 L234.5,348.30 L236.5,348.30 L238.5,348.30 L240.5,348.30 L242.5,348.30 L244.5,348.30 L246.5,348.30 L248.5,348.30 L250.5,348.30 L252.5,348.30 L254.5,348.30 L256.5,348.30 L258.5,348.30 L260.5,348.30 L262.5,348.30 L264.5,348.30 L266.5,348.30 L268.5,348.30 L270.5,348.30 L272.5,348.30 L274.5,348.30 L276.5,348.30 L278.5,348.30 L280.5,348.30 L282.5,348.30 L284.5,348.30 L286.5,348.30 L288.5,348.30 L290.5,348.30 L292.5,348.30 L294.5,348.30 L296.5,348.30 L298.5,348.30 L300.5,348.30 L302.5,348.30 L304.5,348.30 L306.5,348.30 L308.5,348.30 L310.5,348.30 L312.5,348.30 L314.5,348.30 L316.5,348.30 L318.5,348.30 L320.5,348.30 L322.5,348.30 L324.5,348.30 L326.5,348.30 L328.5,348.30 L330.5,348.30 L332.5,348.30 L334.5,348.30 L336.5,348.30 L338.5,348.30 L340.5,348.30 L342.5,348.30 L344.5,348.30 L346.5,348.30 L348.5,348.30 L350.5,348.30 L352.5,348.30 L354.5,348.30 L356.5,348.30 L358.5,348.30 L360.5,348.30 L362.5,348.30 L364.5,348.30 L366.5,348.30 L368.5,348.30 L370.5,348.30 L372.5,348.28 L374.5,348.23 L376.5,348.09 L378.5,347.76 L380.5,347.18 L382.5,346.45 L384.5,345.86 L386.5,345.72 L388.5,346.11 L390.5,346.82 L392.5,347.50 L394.5,347.95 L396.5,348.18 L398.5,348.27 L400.5,348.29 L402.5,348.30 L404.5,348.30 L406.5,348.30 L408.5,348.30 L410.5,348.30 L412.5,348.30 L414.5,348.30 L416.5,348.30 L418.5,348.30 L420.5,348.30 L422.5,348.30 L424.5,348.30 L426.5,348.30 L428.5,348.30 L430.5,348.30 L432.5,348.30 L434.5,348.30 L436.5,348.30 L438.5,348.30 L440.5,348.30 L442.5,348.30 L444.5,348.30 L446.5,348.30 L448.5,348.30 L450.5,348.30 L452.5,348.30 L454.5,348.30 L456.5,348.30 L458.5,348.29 L460.5,348.29 L462.5,348.29 L464.5,348.28 L466.5,348.28 L468.5,348.27 L470.5,348.25 L472.5,348.24 L474.5,348.22 L476.5,348.20 L478.5,348.17 L480.5,348.15 L482.5,348.11 L484.5,348.08 L486.5,348.05 L488.5,348.01 L490.5,347.98 L492.5,347.95 L494.5,347.93 L496.5,347.91 L498.5,347.90 L500.5,347.90 L502.5,347.91 L504.5,347.92 L506.5,347.94 L508.5,347.97 L510.5,348.00 L512.5,348.03 L514.5,348.06 L516.5,348.10 L518.5,348.13 L520.5,348.16 L522.5,348.19 L524.5,348.21 L526.5,348.23 L528.5,348.25 L530.5,348.26 L532.5,348.27 L534.5,348.28 L536.5,348.29 L538.5,348.29 L540.5,348.29 L542.5,348.30 L544.5,348.30 L546.5,348.30 L548.5,348.30 L550.5,348.30 L552.5,348.30 L554.5,348.30 L556.5,348.30 L558.5,348.30 L560.5,348.30 L562.5,348.30 L564.5,348.30 L566.5,348.30 L568.5,348.30 L570.5,348.30 L572.5,348.30 L574.5,348.30 L576.5,348.30 L578.5,348.30 L580.5,348.27 L582.5,348.16 L584.5,348.05 L586.5,347.94 L588.5,347.83 L590.5,347.72 L592.5,347.61 L594.5,347.50 L596.5,347.39 L598.5,347.28 L600.5,347.17 L602.5,347.06 L604.5,346.95 L606.5,346.84 L608.5,346.73 L610.5,346.62 L612.5,346.51 L614.5,346.40 L616.5,346.29 L618.5,346.18 L620.5,346.10 L622.5,346.10 L624.5,346.10 L626.5,346.10 L628.5,346.10 L630.5,346.10 L632.5,346.10 L634.5,346.10 L636.5,346.10 L638.5,346.10 L640.5,346.10 L642.5,346.10 L644.5,346.10 L646.5,346.10 L648.5,346.10 L650.5,346.09 L652.5,346.08 L654.5,346.06 L656.5,346.03 L658.5,345.97 L660.5,345.90 L662.5,345.81 L664.5,345.71 L666.5,345.61 L668.5,345.54 L670.5,345.50 L672.5,345.51 L674.5,345.57 L676.5,345.66 L678.5,345.76 L680.5,345.86 L682.5,345.94 L684.5,346.00 L686.5,346.05 L688.5,346.07 L690.5,346.09 L692.5,346.09 L694.5,346.10 L696.5,346.10 L698.5,346.10 L700.5,346.10 L702.5,346.10 L704.5,346.10 L706.5,346.10" fill="none" stroke="#d0a058" stroke-width="1.0"/>
<path d="M166.5,348.90 L168.5,348.90 L170.5,348.90 L172.5,348.90 L174.5,348.90 L176.5,348.90 L178.5,348.90 L180.5,348.90 L182.5,348.90 L184.5,348.90 L186.5,348.90 L188.5,348.90 L190.5,348.90 L192.5,348.90 L194.5,348.90 L196.5,348.90 L198.5,348.90 L200.5,348.90 L202.5,348.90 L204.5,348.90 L206.5,348.90 L208.5,348.90 L210.5,348.90 L212.5,348.90 L214.5,348.90 L216.5,348.90 L218.5,348.90 L220.5,348.90 L222.5,348.90 L224.5,348.90 L226.5,348.90 L228.5,348.90 L230.5,348.90 L232.5,348.90 L234.5,348.90 L236.5,348.90 L238.5,348.90 L240.5,348.90 L242.5,348.90 L244.5,348.90 L246.5,348.90 L248.5,348.90 L250.5,348.90 L252.5,348.90 L254.5,348.90 L256.5,348.90 L258.5,348.90 L260.5,348.90 L262.5,348.90 L264.5,348.90 L266.5,348.90 L268.5,348.90 L270.5,348.90 L272.5,348.90 L274.5,348.90 L276.5,348.90 L278.5,348.90 L280.5,348.90 L282.5,348.90 L284.5,348.90 L286.5,348.90 L288.5,348.90 L290.5,348.90 L292.5,348.90 L294.5,348.90 L296.5,348.90 L298.5,348.90 L300.5,348.90 L302.5,348.90 L304.5,348.90 L306.5,348.90 L308.5,348.90 L310.5,348.90 L312.5,348.90 L314.5,348.90 L316.5,348.90 L318.5,348.90 L320.5,348.90 L322.5,348.90 L324.5,348.90 L326.5,348.90 L328.5,348.90 L330.5,348.90 L332.5,348.90 L334.5,348.90 L336.5,348.90 L338.5,348.90 L340.5,348.90 L342.5,348.90 L344.5,348.90 L346.5,348.90 L348.5,348.90 L350.5,348.90 L352.5,348.90 L354.5,348.90 L356.5,348.90 L358.5,348.90 L360.5,348.90 L362.5,348.90 L364.5,348.90 L366.5,348.90 L368.5,348.90 L370.5,348.90 L372.5,348.90 L374.5,348.90 L376.5,348.90 L378.5,348.90 L380.5,348.90 L382.5,348.90 L384.5,348.90 L386.5,348.90 L388.5,348.90 L390.5,348.90 L392.5,348.90 L394.5,348.90 L396.5,348.90 L398.5,348.90 L400.5,348.90 L402.5,348.90 L404.5,348.90 L406.5,348.90 L408.5,348.90 L410.5,348.90 L412.5,348.90 L414.5,348.90 L416.5,348.90 L418.5,348.90 L420.5,348.90 L422.5,348.90 L424.5,348.90 L426.5,348.90 L428.5,348.90 L430.5,348.90 L432.5,348.90 L434.5,348.90 L436.5,348.90 L438.5,348.90 L440.5,348.90 L442.5,348.90 L444.5,348.90 L446.5,348.90 L448.5,348.90 L450.5,348.90 L452.5,348.90 L454.5,348.90 L456.5,348.90 L458.5,348.90 L460.5,348.90 L462.5,348.90 L464.5,348.90 L466.5,348.90 L468.5,348.90 L470.5,348.90 L472.5,348.90 L474.5,348.90 L476.5,348.90 L478.5,348.90 L480.5,348.90 L482.5,348.90 L484.5,348.90 L486.5,348.90 L488.5,348.90 L490.5,348.90 L492.5,348.90 L494.5,348.90 L496.5,348.90 L498.5,348.90 L500.5,348.90 L502.5,348.90 L504.5,348.90 L506.5,348.90 L508.5,348.90 L510.5,348.90 L512.5,348.90 L514.5,348.90 L516.5,348.90 L518.5,348.90 L520.5,348.90 L522.5,348.90 L524.5,348.90 L526.5,348.90 L528.5,348.90 L530.5,348.90 L532.5,348.90 L534.5,348.90 L536.5,348.90 L538.5,348.90 L540.5,348.90 L542.5,348.90 L544.5,348.90 L546.5,348.90 L548.5,348.90 L550.5,348.90 L552.5,348.90 L554.5,348.90 L556.5,348.90 L558.5,348.90 L560.5,348.90 L562.5,348.90 L564.5,348.90 L566.5,348.90 L568.5,348.90 L570.5,348.90 L572.5,348.90 L574.5,348.90 L576.5,348.90 L578.5,348.90 L580.5,348.90 L582.5,348.90 L584.5,348.90 L586.5,348.90 L588.5,348.90 L590.5,348.90 L592.5,348.90 L594.5,348.90 L596.5,348.90 L598.5,348.90 L600.5,348.90 L602.5,348.90 L604.5,348.90 L606.5,348.90 L608.5,348.90 L610.5,348.90 L612.5,348.90 L614.5,348.90 L616.5,348.90 L618.5,348.90 L620.5,348.90 L622.5,348.90 L624.5,348.90 L626.5,348.90 L628.5,348.90 L630.5,348.90 L632.5,348.90 L634.5,348.90 L636.5,348.90 L638.5,348.90 L640.5,348.90 L642.5,348.90 L644.5,348.90 L646.5,348.90 L648.5,348.90 L650.5,348.90 L652.5,348.90 L654.5,348.90 L656.5,348.90 L658.5,348.90 L660.5,348.90 L662.5,348.90 L664.5,348.90 L666.5,348.90 L668.5,348.90 L670.5,348.90 L672.5,348.90 L674.5,348.90 L676.5,348.90 L678.5,348.90 L680.5,348.90 L682.5,348.90 L684.5,348.90 L686.5,348.90 L688.5,348.90 L690.5,348.90 L692.5,348.90 L694.5,348.90 L696.5,348.90 L698.5,348.90 L700.5,348.90 L702.5,348.90 L704.5,348.90 L706.5,348.90" fill="none" stroke="#20b020" stroke-width="0.95"/>
<path d="M166.5,393.80 L168.5,392.12 L170.5,390.69 L172.5,389.73 L174.5,389.40 L176.5,389.40 L178.5,389.40 L180.5,389.40 L182.5,389.40 L184.5,389.40 L186.5,389.40 L188.5,389.40 L190.5,389.40 L192.5,389.40 L194.5,389.40 L196.5,389.40 L198.5,389.40 L200.5,389.40 L202.5,389.40 L204.5,389.40 L206.5,389.40 L208.5,389.40 L210.5,388.90 L212.5,388.90 L214.5,388.90 L216.5,388.90 L218.5,388.90 L220.5,388.90 L222.5,388.90 L224.5,388.90 L226.5,388.90 L228.5,388.90 L230.5,388.90 L232.5,388.90 L234.5,388.90 L236.5,388.90 L238.5,388.90 L240.5,388.90 L242.5,388.90 L244.5,388.90 L246.5,388.90 L248.5,388.90 L250.5,388.90 L252.5,388.90 L254.5,388.90 L256.5,388.90 L258.5,388.90 L260.5,388.90 L262.5,388.90 L264.5,388.90 L266.5,388.90 L268.5,388.90 L270.5,388.90 L272.5,388.90 L274.5,388.90 L276.5,388.90 L278.5,388.90 L280.5,388.90 L282.5,388.90 L284.5,388.90 L286.5,388.90 L288.5,388.90 L290.5,388.90 L292.5,388.90 L294.5,388.90 L296.5,388.90 L298.5,388.90 L300.5,388.90 L302.5,388.90 L304.5,388.90 L306.5,388.90 L308.5,388.90 L310.5,388.90 L312.5,388.90 L314.5,388.90 L316.5,388.90 L318.5,388.90 L320.5,388.90 L322.5,388.90 L324.5,388.90 L326.5,388.90 L328.5,388.90 L330.5,388.90 L332.5,388.90 L334.5,388.90 L336.5,388.90 L338.5,388.90 L340.5,388.90 L342.5,388.90 L344.5,388.90 L346.5,388.90 L348.5,388.90 L350.5,388.90 L352.5,388.90 L354.5,388.90 L356.5,388.90 L358.5,388.90 L360.5,388.90 L362.5,388.90 L364.5,388.90 L366.5,388.90 L368.5,388.90 L370.5,388.90 L372.5,388.90 L374.5,388.90 L376.5,388.90 L378.5,388.90 L380.5,388.90 L382.5,388.90 L384.5,388.90 L386.5,388.90 L388.5,388.90 L390.5,388.90 L392.5,388.90 L394.5,388.90 L396.5,388.90 L398.5,388.90 L400.5,388.90 L402.5,388.90 L404.5,388.90 L406.5,388.90 L408.5,388.90 L410.5,388.90 L412.5,388.90 L414.5,388.90 L416.5,388.90 L418.5,388.90 L420.5,388.90 L422.5,388.90 L424.5,388.90 L426.5,388.90 L428.5,388.90 L430.5,388.90 L432.5,388.90 L434.5,388.90 L436.5,388.90 L438.5,388.90 L440.5,388.90 L442.5,388.90 L444.5,388.90 L446.5,388.90 L448.5,388.90 L450.5,388.90 L452.5,388.90 L454.5,388.90 L456.5,388.90 L458.5,388.90 L460.5,388.90 L462.5,388.90 L464.5,388.90 L466.5,388.90 L468.5,388.90 L470.5,388.90 L472.5,388.90 L474.5,388.90 L476.5,388.90 L478.5,388.90 L480.5,388.90 L482.5,388.90 L484.5,388.90 L486.5,388.90 L488.5,388.90 L490.5,388.90 L492.5,388.90 L494.5,388.90 L496.5,388.90 L498.5,388.90 L500.5,388.90 L502.5,388.90 L504.5,388.90 L506.5,388.90 L508.5,388.90 L510.5,388.90 L512.5,388.90 L514.5,388.90 L516.5,388.90 L518.5,388.90 L520.5,388.90 L522.5,388.90 L524.5,388.90 L526.5,388.90 L528.5,388.90 L530.5,388.90 L532.5,388.90 L534.5,388.90 L536.5,388.90 L538.5,388.90 L540.5,388.90 L542.5,388.90 L544.5,388.90 L546.5,388.90 L548.5,388.90 L550.5,388.90 L552.5,388.90 L554.5,388.90 L556.5,388.90 L558.5,388.90 L560.5,388.90 L562.5,388.90 L564.5,388.90 L566.5,388.90 L568.5,388.90 L570.5,388.90 L572.5,388.90 L574.5,388.90 L576.5,388.90 L578.5,388.90 L580.5,388.90 L582.5,388.90 L584.5,388.90 L586.5,388.90 L588.5,388.90 L590.5,388.90 L592.5,388.90 L594.5,388.90 L596.5,388.90 L598.5,388.90 L600.5,388.90 L602.5,388.90 L604.5,388.90 L606.5,388.90 L608.5,388.90 L610.5,388.90 L612.5,388.90 L614.5,388.90 L616.5,388.90 L618.5,388.90 L620.5,388.90 L622.5,388.90 L624.5,388.90 L626.5,388.90 L628.5,388.90 L630.5,388.90 L632.5,388.90 L634.5,388.90 L636.5,388.90 L638.5,388.90 L640.5,388.90 L642.5,388.90 L644.5,388.90 L646.5,388.90 L648.5,388.90 L650.5,388.90 L652.5,388.90 L654.5,388.90 L656.5,388.90 L658.5,388.90 L660.5,388.90 L662.5,388.90 L664.5,388.90 L666.5,388.90 L668.5,388.90 L670.5,388.90 L672.5,388.90 L674.5,388.90 L676.5,388.90 L678.5,388.90 L680.5,388.90 L682.5,388.90 L684.5,388.90 L686.5,388.90 L688.5,388.90 L690.5,388.90 L692.5,388.90 L694.5,388.90 L696.5,388.90 L698.5,388.90 L700.5,388.90 L702.5,388.90 L704.5,388.90 L706.5,388.90" fill="none" stroke="#b83cbc" stroke-width="1.05"/>
<line x1="246.3" y1="59.5" x2="246.3" y2="154.0" stroke="#8a8aa0" stroke-width="0.9"/>
<line x1="246.3" y1="183.5" x2="246.3" y2="278.0" stroke="#8a8aa0" stroke-width="0.9"/>
<line x1="246.3" y1="307.5" x2="246.3" y2="401.5" stroke="#8a8aa0" stroke-width="0.9"/>
<rect x="716.3" y="61.3" width="3.4" height="3.4" fill="#e04860"/>
<text transform="translate(722.30 64.70) scale(0.75 1)" x="1.75 5.24 8.73" y="0" text-anchor="middle" font-family="Liberation Mono" font-size="5.2" fill="#585878" >FPS</text>
<rect x="716.3" y="185.3" width="3.4" height="3.4" fill="#10b010"/>
<text transform="translate(722.30 188.70) scale(0.75 1)" x="1.75 5.24 8.73 12.23 15.72 19.21 22.71" y="0" text-anchor="middle" font-family="Liberation Mono" font-size="5.2" fill="#585878" >cpu:0-5</text>
<rect x="716.3" y="193.8" width="3.4" height="3.4" fill="#d8a030"/>
<text transform="translate(722.30 197.20) scale(0.75 1)" x="1.75 5.24 8.73 12.23 15.72 19.21 22.71" y="0" text-anchor="middle" font-family="Liberation Mono" font-size="5.2" fill="#585878" >cpu:6-7</text>
<rect x="716.3" y="309.4" width="3.4" height="3.4" fill="#c020c0"/>
<text transform="translate(722.30 312.80) scale(0.75 1)" x="1.75 5.24 8.73 12.23 15.72 19.21 22.71" y="0" text-anchor="middle" font-family="Liberation Mono" font-size="5.2" fill="#585878" >current</text>
<rect x="716.3" y="317.9" width="3.4" height="3.4" fill="#10c010"/>
<text transform="translate(722.30 321.30) scale(0.75 1)" x="1.75 5.24 8.73 12.23 15.72 19.21 22.71" y="0" text-anchor="middle" font-family="Liberation Mono" font-size="5.2" fill="#585878" >voltage</text>
<rect x="716.3" y="326.4" width="3.4" height="3.4" fill="#d8a030"/>
<text transform="translate(722.30 329.80) scale(0.75 1)" x="1.75 5.24 8.73 12.23 15.72" y="0" text-anchor="middle" font-family="Liberation Mono" font-size="5.2" fill="#585878" >power</text>
<circle cx="147.8" cy="25.5" r="1.75" fill="none" stroke="#4350a0" stroke-width="0.85"/>
<path d="M144.5,30.7 C144.8,28.6 146.2,27.6 147.8,27.6 C149.4,27.6 150.8,28.6 151.1,30.7" fill="none" stroke="#4350a0" stroke-width="0.85"/>
<rect x="156.8" y="25.4" width="5.9" height="5" rx="0.9" fill="none" stroke="#4350a0" stroke-width="0.85"/>
<path d="M157.7,26.7 L159.8,28.4" fill="none" stroke="#4350a0" stroke-width="0.7"/>
<path d="M158.4,29.7 H162.2" fill="none" stroke="#4350a0" stroke-width="1.1"/>
<path d="M710.7,30.9 V24.6 H715.7 V30.9 M710.7,26.3 H715.7 M710.7,28.9 H715.7" fill="none" stroke="#4350a0" stroke-width="0.95"/>
<path d="M721.6,25.2 L726.8,29.4 M726.8,25.2 L721.6,29.4" fill="none" stroke="#4350a0" stroke-width="0.85"/>
<ellipse cx="722.1" cy="29.6" rx="1.1" ry="0.9" fill="#4350a0"/><ellipse cx="726.4" cy="29.6" rx="1.1" ry="0.9" fill="#4350a0"/>
<path d="M732.4,25.4 H735 L735.8,26.2 H738.2 V29.9 H732.4 Z M732.4,27.4 H738.8" fill="none" stroke="#4350a0" stroke-width="0.85"/>
<path d="M4.4,7.6 Q5.6,5.4 8.8,6.2 L9.4,8.4 L4.8,8.6 Z" fill="#3c80c0"/>
<path d="M6.2,8.6 Q8,7.6 11.2,8.2 L10.6,8.8 L6.4,8.9 Z" fill="#5ab0e0"/>
<path d="M9.0,2.3 L11.4,7.7 L7.6,7.7 Z" fill="#9a8a48"/>
<path d="M9.0,2.3 L9.6,7.7 L7.6,7.7 Z" fill="#d8c890"/>
<path d="M9.0,2.3 L11.4,7.7" stroke="#3a3020" stroke-width="0.5"/>
<line x1="706" y1="5.4" x2="710.3" y2="5.4" stroke="#333" stroke-width="0.7"/>
<rect x="723.5" y="3.5" width="3.8" height="3.6" rx="0.2" fill="none" stroke="#3a3a3a" stroke-width="0.85"/>
<path d="M740.5,3.7 L744.2,7.2 M744.2,3.7 L740.5,7.2" stroke="#2a2a2a" stroke-width="0.9"/>
<circle cx="16.2" cy="344.6" r="6.1" fill="none" stroke="#fff" stroke-width="1.25"/>
<path d="M16.2,341.5 V347.7 M13.1,344.6 H19.3" stroke="#fff" stroke-width="1.25"/>
<path d="M11.3,385.5 L17.6,379.8" stroke="#fff" stroke-width="3.0" stroke-linecap="round"/>
<circle cx="18.9" cy="378.4" r="4.3" fill="#fff"/>
<path d="M20.3,377.0 L23.6,373.8" stroke="#8593d9" stroke-width="1.7" stroke-linecap="round"/>
<circle cx="16.6" cy="416.5" r="6.3" fill="none" stroke="#fff" stroke-width="1.2"/>
<circle cx="16.8" cy="413.6" r="0.95" fill="#fff"/>
<path d="M15.5,415.6 H17.0 V419.8 M14.9,419.9 H18.3" fill="none" stroke="#fff" stroke-width="1.0"/>
<text x="47.2" y="353.9" font-family="Liberation Mono" font-size="5.6" fill="#1a1a1a" stroke="#1a1a1a" stroke-width="0.2" textLength="30.8" lengthAdjust="spacingAndGlyphs">MX799J(WIFI)</text>
<path d="M112.6,351.3 L114.7,353.4 L116.8,351.3" fill="none" stroke="#222" stroke-width="1.15"/>
<path d="M79.2,369.70000000000005 H83.8 M79.0,371.5 H84.0 M80.7,369.70000000000005 V371.90000000000003 Q80.60000000000001,373.3 79.4,374.0 M82.4,369.70000000000005 V374.0" fill="none" stroke="#333" stroke-width="0.68"/>
<path d="M85.2,369.1 L84.5,371.70000000000005 H86.2 M85.9,370.3 Q85.60000000000001,373.1 84.2,374.0 M84.60000000000001,371.90000000000003 L86.2,373.70000000000005 M87.60000000000001,369.1 L86.8,370.90000000000003 H88.8 M88.3,370.20000000000005 L88.8,370.90000000000003 M86.9,371.90000000000003 H88.7 V373.90000000000003 H86.9 Z" fill="none" stroke="#333" stroke-width="0.64"/>
<path d="M79.2,388.6 H81.4 M80.2,388.1 V390.40000000000003 M79.2,389.6 H81.4 M81.8,388.5 H83.8 M82.4,388.5 V390.40000000000003 M82.4,389.3 H84.0 M80.2,390.90000000000003 H83.0 V393.0 H80.2 Z M80.2,391.95000000000005 H83.0" fill="none" stroke="#333" stroke-width="0.64"/>
<path d="M85.2,388.1 L84.2,390.1 M84.8,389.3 V393.0 M85.8,388.6 H89.0 M86.2,389.40000000000003 H88.60000000000001 V390.20000000000005 H86.2 Z M85.8,391.0 H89.0 M86.4,391.8 H88.60000000000001 M87.5,391.8 V393.0" fill="none" stroke="#333" stroke-width="0.64"/>
<path d="M75.3,407.1 L74.3,409.1 M74.89999999999999,408.3 V412.0 M76.1,407.40000000000003 H78.6 V408.90000000000003 H76.1 Z M75.7,409.8 H79.1 M77.39999999999999,408.90000000000003 V412.0 M77.39999999999999,410.0 L75.89999999999999,411.70000000000005 M77.39999999999999,410.0 L79.1,411.70000000000005" fill="none" stroke="#333" stroke-width="0.64"/>
<path d="M79.3,408.1 H84.1 M81.7,407.1 L79.7,412.0 M80.7,409.5 V412.0 M81.5,409.1 H83.7 L82.7,410.0 V412.0 M81.3,410.6 H84.1" fill="none" stroke="#333" stroke-width="0.64"/>
<path d="M84.3,408.1 H86.7 M85.5,407.1 V409.1 M84.5,407.40000000000003 L84.89999999999999,408.0 M86.5,407.40000000000003 L86.1,408.0 M84.3,409.8 H86.7 M85.3,409.1 L84.7,412.0 M84.7,410.70000000000005 L86.5,411.90000000000003 M87.5,407.1 L86.89999999999999,408.90000000000003 M87.2,408.3 H89.1 M88.6,408.3 Q88.2,410.90000000000003 86.89999999999999,412.0 M87.3,409.3 L89.1,412.0" fill="none" stroke="#333" stroke-width="0.64"/>
<path d="M89.3,408.6 H90.89999999999999 M90.2,407.1 V412.0 L89.7,411.6 M89.3,410.5 L90.89999999999999,409.70000000000005 M91.3,407.5 H93.89999999999999 V408.6 H91.3 M91.3,407.5 V410.1 Q91.3,411.3 91.0,412.0 M91.6,409.6 H94.1 M92.8,408.6 V410.3 M92.1,410.5 H93.7 V411.90000000000003 H92.1 Z" fill="none" stroke="#333" stroke-width="0.6"/>
<line x1="171" y1="429.4" x2="703" y2="429.4" stroke="#6878d0" stroke-width="1.5"/>
<rect x="161" y="426.1" width="11.2" height="6.7" rx="3.3" fill="#7c7c7c"/>
<rect x="701.6" y="426.2" width="11.2" height="6.6" rx="3.3" fill="#7c7c7c"/>
</svg>
<svg class="abs" id="wm" width="750" height="447" viewBox="0 0 750 447" opacity="0.33">
<path d="M673.5,400.6 C661,400.5 652,408 651.6,418.5 C651.5,421 652.5,424 654.4,426" fill="none" stroke="#5a5a5a" stroke-width="2.7" stroke-linecap="round"/>
<path d="M669.6,406.5 C663,407.5 658,411.5 657.8,417 C657.6,421.5 660,425.5 664.7,427.5" fill="none" stroke="#5a5a5a" stroke-width="2.7" stroke-linecap="round"/>
<path d="M669,413.4 C666,414 664.2,416 664.2,418.2 C664.2,420 665,421.5 666,422.2" fill="none" stroke="#5a5a5a" stroke-width="2.7" stroke-linecap="round"/>
<path d="M675,408.2 H686.2 C686.2,405.2 683.8,403.4 680.5,403.4 C677,403.4 674.6,405.6 674.6,408.3 C674.6,411 677,412.4 680.5,412.4 C682.6,412.4 684.4,412 685.8,411" fill="none" stroke="#5a5a5a" stroke-width="2.7" stroke-linecap="round"/>
<path d="M671.6,415.4 H689.6 C689.4,423 688.6,428 686.5,431.5 C685.5,433.5 683.8,434.2 682.4,433.9 M677.5,416.8 C676.5,420 673.5,423 669.6,424.5 M683.9,417.2 C682.5,422 679,426.5 673.5,428.8 M666,428.8 C672,430.5 678,430.5 684,429.5" fill="none" stroke="#5a5a5a" stroke-width="2.7" stroke-linecap="round"/>
<path d="M699,403.2 L695,416.6 M697.2,409.9 H716 M707.9,402.7 V431 M698.2,420.6 H716 M693.6,430.5 H719.5" fill="none" stroke="#5a5a5a" stroke-width="2.7" stroke-linecap="round"/>
<path d="M722.2,404 L725.8,406.7 M720.4,411.7 L725.8,416.2 M727.6,422 L721.3,433.6 M732,406.7 L745.5,403.2 M729.4,414.8 H746.4 M738.3,407.6 V422.9 M733.5,422.9 H745 C746,422.9 746.6,423.5 746.6,424.5 V432 C746.6,433 746,433.6 745,433.6 H733.5 C732.5,433.6 732,433 732,432 V424.5 C732,423.5 732.5,422.9 733.5,422.9 Z" fill="none" stroke="#5a5a5a" stroke-width="2.7" stroke-linecap="round"/>
</svg>
<div class="abs" id="band"></div>
<svg class="abs" width="750" height="447" viewBox="0 0 750 447" style="left:0;top:0">
<text x="654.4" y="444.8" text-anchor="middle" font-family="Liberation Sans" font-size="10.8" fill="rgba(255,255,255,0.5)">w</text><text x="664" y="444.8" text-anchor="middle" font-family="Liberation Sans" font-size="10.8" fill="rgba(255,255,255,0.5)">w</text><text x="674.1" y="444.8" text-anchor="middle" font-family="Liberation Sans" font-size="10.8" fill="rgba(255,255,255,0.5)">w</text><text x="680.8" y="444.8" text-anchor="middle" font-family="Liberation Sans" font-size="10.8" fill="rgba(255,255,255,0.5)">.</text><text x="688.3" y="444.8" text-anchor="middle" font-family="Liberation Sans" font-size="10.8" fill="rgba(255,255,255,0.5)">3</text><text x="695.2" y="444.8" text-anchor="middle" font-family="Liberation Sans" font-size="10.8" fill="rgba(255,255,255,0.5)">e</text><text x="702.4" y="444.8" text-anchor="middle" font-family="Liberation Sans" font-size="10.8" fill="rgba(255,255,255,0.5)">l</text><text x="707.2" y="444.8" text-anchor="middle" font-family="Liberation Sans" font-size="10.8" fill="rgba(255,255,255,0.5)">i</text><text x="712.6" y="444.8" text-anchor="middle" font-family="Liberation Sans" font-size="10.8" fill="rgba(255,255,255,0.5)">f</text><text x="719.6" y="444.8" text-anchor="middle" font-family="Liberation Sans" font-size="10.8" fill="rgba(255,255,255,0.5)">e</text><text x="725.5" y="444.8" text-anchor="middle" font-family="Liberation Sans" font-size="10.8" fill="rgba(255,255,255,0.5)">.</text><text x="731.9" y="444.8" text-anchor="middle" font-family="Liberation Sans" font-size="10.8" fill="rgba(255,255,255,0.5)">n</text><text x="740.1" y="444.8" text-anchor="middle" font-family="Liberation Sans" font-size="10.8" fill="rgba(255,255,255,0.5)">e</text><text x="747.3" y="444.8" text-anchor="middle" font-family="Liberation Sans" font-size="10.8" fill="rgba(255,255,255,0.5)">t</text>
</svg>
</body></html>
